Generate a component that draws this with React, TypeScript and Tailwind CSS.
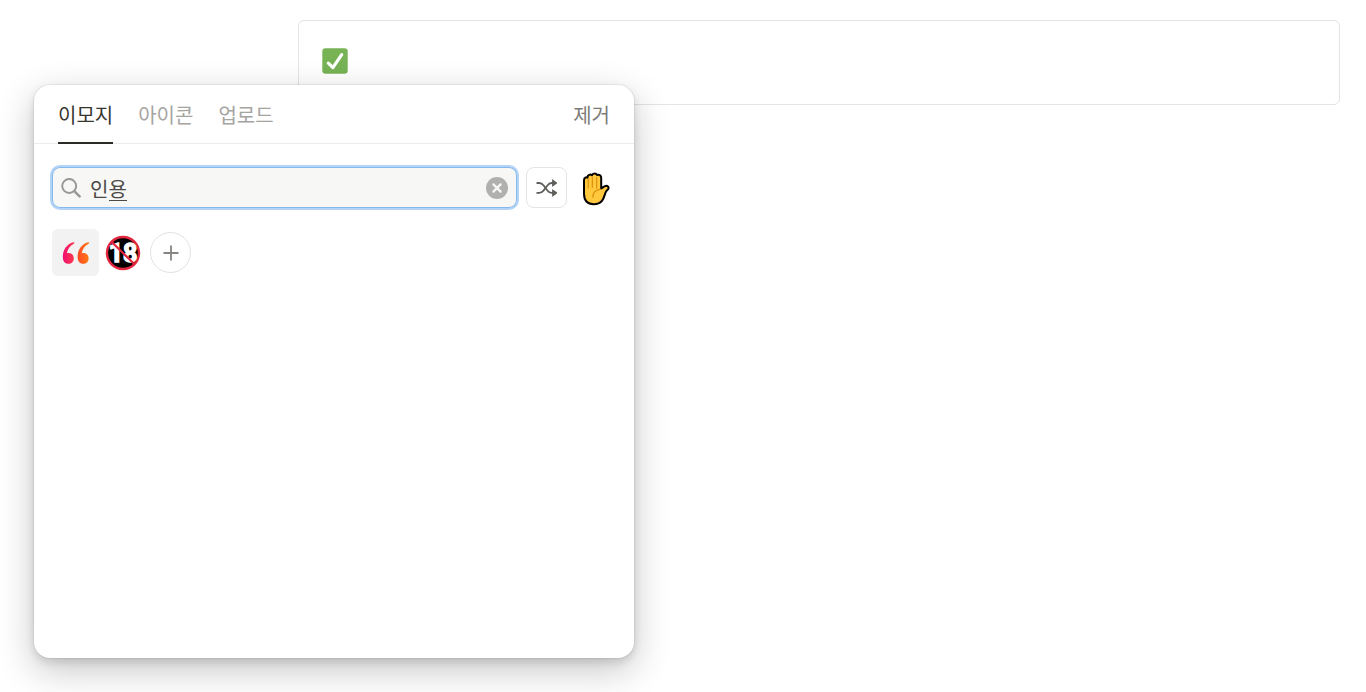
import React, { useState } from "react";

const CheckEmoji: React.FC = () => (
  <svg viewBox="0 0 26 26" className="w-[26px] h-[26px]" role="img" aria-label="check">
    <rect x="0.3" y="0.3" width="25.4" height="25.4" rx="3.2" fill="#77b255" />
    <path d="M6.3 15.2L10.9 19.6L19.7 6.6" fill="none" stroke="#fff" strokeWidth="3.2" strokeLinecap="round" strokeLinejoin="round" />
  </svg>
);

const SearchIcon: React.FC = () => (
  <svg viewBox="0 0 20 20" className="w-5 h-5 shrink-0" fill="none" stroke="#979794">
    <circle cx="8.2" cy="8" r="7" strokeWidth="1.9" />
    <path d="M13.3 13.1L18.6 18.4" strokeWidth="2.5" strokeLinecap="round" />
  </svg>
);

const ClearIcon: React.FC = () => (
  <svg viewBox="0 0 22 22" className="w-[22px] h-[22px]">
    <circle cx="11" cy="11" r="11" fill="#b0b0ae" />
    <path d="M7.4 7.4L14.6 14.6M14.6 7.4L7.4 14.6" stroke="#f7f7f5" strokeWidth="2.3" strokeLinecap="round" />
  </svg>
);

const ShuffleIcon: React.FC = () => (
  <svg viewBox="0 0 22 18" className="w-[22px] h-[18px]">
    <g fill="none" stroke="#5f5e5a" strokeWidth="1.8" strokeLinecap="round">
      <path d="M1.2 4H3.2C5.4 4 6.4 4.9 7.7 6.5L11.2 11.2C12.5 12.9 13.6 13.9 15.6 13.9H17" />
      <path d="M1.2 13.9H3.2C5.4 13.9 6.4 13 7.7 11.4L11.2 6.7C12.5 5 13.6 4 15.6 4H17" />
    </g>
    <path d="M16.1 0.9V7.1Q16.1 8 16.8 7.5L20.9 4.6Q21.5 4 20.9 3.4L16.8 0.5Q16.1 0 16.1 0.9Z" fill="#5f5e5a" />
    <path d="M16.1 10.8V17Q16.1 17.9 16.8 17.4L20.9 14.5Q21.5 13.9 20.9 13.3L16.8 10.4Q16.1 9.9 16.1 10.8Z" fill="#5f5e5a" />
  </svg>
);

const HandEmoji: React.FC = () => (
  <svg viewBox="0 0 28 34" className="w-7 h-[34px]">
    <path
      d="M2 8.2C2 5.6 4.4 4.9 5.5 5.7C5.3 2.7 8.5 1.8 10 3.2C10.8 0.8 14.2 0.9 15 3C17 2.1 19.2 3.3 19.2 5.8V16.5C21 15.4 22.2 14.1 23.6 13.9C25.6 13.6 27 15 26.4 16.7C25.9 18 24.4 18.3 23.5 20.6C21.9 25.5 20.6 32.2 11.8 32.2C5.3 32.2 2 28 2 21.6Z"
      fill="#ffc83d"
      stroke="#000"
      strokeWidth="2"
      strokeLinejoin="round"
    />
    <path d="M6.2 7V16M10.3 5.3V15.5M14.7 5.3V16M18.2 17.4C14 17.6 10.6 20.4 10.9 25.2" fill="none" stroke="#d98a08" strokeWidth="1.1" strokeLinecap="round" />
  </svg>
);

const QuoteEmoji: React.FC = () => (
  <svg viewBox="0 0 28 24" className="w-7 h-6">
    <defs>
      <linearGradient id="quoteLeft" x1="0" x2="1">
        <stop offset="0" stopColor="#f20d73" />
        <stop offset="1" stopColor="#fb3a4a" />
      </linearGradient>
      <linearGradient id="quoteRight" x1="0" x2="1">
        <stop offset="0" stopColor="#ff4a2a" />
        <stop offset="1" stopColor="#ff7a12" />
      </linearGradient>
    </defs>
    <path d="M11.2 1.2C4.6 3 0.8 9 0.8 16C0.8 20 3 22.8 6.4 22.8C9.6 22.8 11.8 20.5 11.8 17.4C11.8 14.2 9.6 12 6.7 12C5.9 12 5.4 12.1 4.9 12.3C5.5 8.3 8 4.8 11.8 2.7C12.9 2.1 12.4 0.9 11.2 1.2Z" fill="url(#quoteLeft)" />
    <path d="M26 1.2C19.4 3 15.6 9 15.6 16C15.6 20 17.8 22.8 21.2 22.8C24.4 22.8 26.6 20.5 26.6 17.4C26.6 14.2 24.4 12 21.5 12C20.7 12 20.2 12.1 19.7 12.3C20.3 8.3 22.8 4.8 26.6 2.7C27.7 2.1 27.2 0.9 26 1.2Z" fill="url(#quoteRight)" />
  </svg>
);

const Under18Emoji: React.FC = () => (
  <svg viewBox="0 0 36 36" className="w-9 h-9">
    <circle cx="18" cy="18" r="16" fill="#000" stroke="#e3263f" strokeWidth="2.4" />
    <g fill="#fff" stroke="#fff" strokeWidth="1.4" fontSize="25" fontWeight="700" fontFamily="Roboto, 'Liberation Sans', sans-serif" textAnchor="middle">
      <text x="18" y="27">18</text>
    </g>
    <path d="M6.5 6.7L29.5 29.3" stroke="#e3263f" strokeWidth="2.2" />
  </svg>
);

interface TabProps {
  label: string;
  active: boolean;
  onClick: () => void;
}

const Tab: React.FC<TabProps> = ({ label, active, onClick }) => (
  <button
    type="button"
    role="tab"
    aria-selected={active}
    onClick={onClick}
    className={`-mb-px h-[59px] border-b-2 pt-0.5 ${active ? "border-[#2b2a27] text-[#37352f]" : "border-transparent text-[#a5a4a1]"}`}
  >
    {label}
  </button>
);

const tabs = ["이모지", "아이콘", "업로드"];

const EmojiPicker: React.FC = () => {
  const [tab, setTab] = useState(tabs[0]);
  const [query, setQuery] = useState("인용");

  return (
    <section className="absolute left-[34px] top-[85px] flex w-[600px] max-w-full min-h-[573px] flex-col rounded-2xl bg-white shadow-[0_0_0_1px_rgba(15,15,15,0.05),0_4px_8px_rgba(15,15,15,0.12),0_12px_36px_rgba(15,15,15,0.24)]">
      <header className="flex justify-between border-b border-[#ececeb] px-6">
        <div role="tablist" className="flex gap-[25px]">
          {tabs.map((name) => (
            <Tab key={name} label={name} active={name === tab} onClick={() => setTab(name)} />
          ))}
        </div>
        <button type="button" className="-mb-px h-[59px] border-b-2 border-transparent pt-0.5 text-[#7d7c78]">제거</button>
      </header>

      <div className="flex items-center gap-2 px-[18px] pt-[23px]">
        <label className="relative mr-px flex h-[41px] flex-1 items-center gap-[9px] rounded-lg bg-[#f7f7f5] px-[9px] shadow-[inset_0_0_0_1px_#85b8ee,0_0_0_2px_#b3d4f7]">
          <SearchIcon />
          <input
            type="text"
            aria-label="검색"
            value={query}
            onChange={(e) => setQuery(e.target.value)}
            className="min-w-0 flex-1 bg-transparent pt-0.5 text-[#4b4a46] outline-none"
          />
          {/* IME composition mark under the last syllable */}
          {query === "인용" && <span className="absolute left-[57px] bottom-[7px] h-px w-[18px] bg-[#4b4a46]" />}
          <button type="button" aria-label="지우기" onClick={() => setQuery("")}>
            <ClearIcon />
          </button>
        </label>
        <button type="button" aria-label="무작위" className="flex size-[41px] items-center justify-center rounded-lg border border-[#e4e4e3]">
          <ShuffleIcon />
        </button>
        <button type="button" aria-label="피부색" className="flex size-[41px] items-center justify-center pt-0.5">
          <HandEmoji />
        </button>
      </div>

      <div className="flex items-center px-[18px] pt-[21px]">
        <button type="button" aria-label="인용" className="flex size-[47px] items-center justify-center rounded-md bg-[#f2f2f2]">
          <QuoteEmoji />
        </button>
        <button type="button" aria-label="미성년자 이용 불가" className="flex size-[47px] items-center justify-center">
          <Under18Emoji />
        </button>
        <button type="button" aria-label="추가" className="ml-1 flex size-[41px] items-center justify-center rounded-full border border-[#e2e2e1]">
          <svg viewBox="0 0 16 16" className="size-4">
            <path d="M8 0.5V15.5M0.5 8H15.5" stroke="#858482" strokeWidth="1.8" />
          </svg>
        </button>
      </div>
    </section>
  );
};

const App: React.FC = () => {
  return (
    <main className="relative min-h-screen overflow-hidden bg-white pt-5 pr-[26px] pl-[298px] text-[20px] leading-7 font-['Noto_Sans_CJK_KR',sans-serif]">
      <div className="flex h-[85px] items-start rounded-md border border-[#e4e4e4] px-[23px] pt-[27px]">
        <button type="button" aria-label="아이콘 변경">
          <CheckEmoji />
        </button>
      </div>
      <EmojiPicker />
    </main>
  );
};

export default App;
